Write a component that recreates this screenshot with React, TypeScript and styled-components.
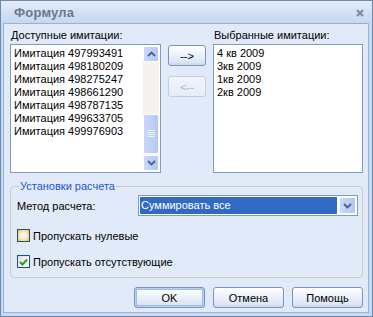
import React from "react";
import styled, { createGlobalStyle } from "styled-components";

const available = [
  "Имитация 497993491",
  "Имитация 498180209",
  "Имитация 498275247",
  "Имитация 498661290",
  "Имитация 498787135",
  "Имитация 499633705",
  "Имитация 499976903",
];

const selected = ["4 кв 2009", "3кв 2009", "1кв 2009", "2кв 2009"];

const GlobalStyle = createGlobalStyle`
  html, body {
    margin: 0;
    padding: 0;
    background: #ffffff;
  }
  body {
    font-family: "Liberation Sans", Arial, sans-serif;
    font-size: 11px;
    color: #000;
  }
`;

const Window = styled.div`
  box-sizing: border-box;
  width: 373px;
  height: 317px;
  display: flex;
  flex-direction: column;
  border: 1px solid #6f87ad;
  background: #c8d9f1;
`;

const TitleBar = styled.div`
  height: 22px;
  display: flex;
  align-items: center;
  justify-content: space-between;
  padding: 0 8px 0 13px;
  background: linear-gradient(#e4edf9, #cfdff4 60%, #c6d8f1);
`;

const Title = styled.span`
  font-size: 13px;
  font-weight: bold;
  color: #6c778a;
  letter-spacing: 0.2px;
`;

const Close = styled.svg`
  display: block;
  margin-top: 1px;
`;

const Body = styled.div`
  flex: 1;
  display: flex;
  flex-direction: column;
  margin: 0 3px 3px 2px;
  border: 1px solid #96b2da;
  background: #e0eaf8;
  padding: 3px 5px 0 6px;
`;

const TopRow = styled.div`
  display: grid;
  grid-template-columns: 151px 38px 150px;
  column-gap: 7px;
`;

const Column = styled.div`
  display: flex;
  flex-direction: column;
`;

const Label = styled.div`
  height: 13px;
  line-height: 13px;
  margin: 2px 0 2px 1px;
`;

const ListBox = styled.div`
  box-sizing: border-box;
  height: 129px;
  border: 1px solid #7f9db9;
  background: #fff;
  display: flex;
`;

const Items = styled.div`
  flex: 1;
  padding: 2px 0 0 3px;
`;

const Item = styled.div`
  height: 13px;
  line-height: 13px;
  white-space: nowrap;
`;

const ScrollBar = styled.div`
  width: 16px;
  margin: 1px 1px 1px 0;
  display: flex;
  flex-direction: column;
  background: #f4f3ee;
`;

const ScrollButton = styled.div<{ $grow?: boolean }>`
  box-sizing: border-box;
  height: ${(p) => (p.$grow ? "40px" : "16px")};
  border: 1px solid #fff;
  border-radius: 2px;
  background: linear-gradient(90deg, #c9d8fc, #bccffa 60%, #b2c7f6);
  display: flex;
  align-items: center;
  justify-content: center;
`;

const Track = styled.div`
  flex: 1;
`;

const MoveColumn = styled.div`
  display: flex;
  flex-direction: column;
  gap: 10px;
  padding-top: 18px;
`;

const Button = styled.button<{ $width?: number; $default?: boolean }>`
  box-sizing: border-box;
  width: ${(p) => p.$width ?? 38}px;
  height: 21px;
  padding: 0;
  font-family: "Liberation Sans", Arial, sans-serif;
  font-size: 11px;
  color: ${(p) => (p.disabled ? "#a9b4c4" : "#000")};
  border: 1px solid ${(p) => (p.disabled ? "#c3cfe0" : "#7d94b8")};
  border-radius: 3px;
  background: ${(p) =>
    p.disabled
      ? "linear-gradient(#f1f5fc, #e6edf8)"
      : "linear-gradient(#ffffff, #edf2fb 45%, #dce6f5 85%, #c9d7ed)"};
  box-shadow: ${(p) =>
    p.$default ? "inset 0 0 0 1px #b7d0f5, inset 0 0 0 2px #9dbdef" : "none"};
`;

const Group = styled.fieldset`
  margin: 7px 0 0 0;
  padding: 3px 4px 9px 6px;
  border: 1px solid #cfccbb;
  border-radius: 4px;
  display: flex;
  flex-direction: column;
`;

const Legend = styled.legend`
  color: #1e55d6;
  padding: 0 1px;
  margin-left: 2px;
  font-size: 11px;
`;

const MethodRow = styled.div`
  display: flex;
  align-items: center;
  justify-content: space-between;
`;

const Select = styled.div`
  box-sizing: border-box;
  width: 220px;
  height: 21px;
  border: 1px solid #7f9db9;
  background: #fff;
  display: flex;
  padding: 1px;
`;

const SelectValue = styled.div`
  flex: 1;
  background: #316ac5;
  color: #fff;
  line-height: 17px;
  padding-left: 1px;
  margin-right: 2px;
`;

const DropButton = styled(ScrollButton)`
  height: 17px;
  width: 17px;
`;

const CheckRow = styled.label<{ $top: number }>`
  display: flex;
  align-items: center;
  gap: 3px;
  height: 13px;
  margin-top: ${(p) => p.$top}px;
`;

const CheckBox = styled.span<{ $hover?: boolean }>`
  box-sizing: border-box;
  width: 13px;
  height: 13px;
  border: 1px solid #1c5180;
  background: ${(p) =>
    p.$hover
      ? "radial-gradient(circle, #f8f4e8 35%, #fbd58a 70%, #f7b43f)"
      : "linear-gradient(135deg, #dcdcd6, #fbfbf9 70%)"};
  display: flex;
  align-items: center;
  justify-content: center;
`;

const Footer = styled.div`
  display: flex;
  justify-content: flex-end;
  gap: 8px;
  margin-top: 9px;
`;

const Arrow = ({ dir }: { dir: "up" | "down" }) => (
  <svg width="9" height="6" viewBox="0 0 9 6">
    <path
      d={dir === "up" ? "M1 5 L4.5 1.5 L8 5" : "M1 1 L4.5 4.5 L8 1"}
      fill="none"
      stroke="#4d6185"
      strokeWidth="1.8"
    />
  </svg>
);

const Grip = () => (
  <svg width="7" height="8" viewBox="0 0 7 8">
    {[0.5, 2.5, 4.5, 6.5].map((y) => (
      <line key={y} x1="0" y1={y} x2="7" y2={y} stroke="#eef3fe" strokeWidth="1" />
    ))}
  </svg>
);

export default function App() {
  return (
    <>
      <GlobalStyle />
      <Window>
        <TitleBar>
          <Title>Формула</Title>
          <Close width="8" height="8" viewBox="0 0 8 8">
            <path d="M1 1 L7 7 M7 1 L1 7" stroke="#7d8899" strokeWidth="2" />
          </Close>
        </TitleBar>
        <Body>
          <TopRow>
            <Column>
              <Label>Доступные имитации:</Label>
              <ListBox>
                <Items>
                  {available.map((t) => (
                    <Item key={t}>{t}</Item>
                  ))}
                </Items>
                <ScrollBar>
                  <ScrollButton>
                    <Arrow dir="up" />
                  </ScrollButton>
                  <Track />
                  <ScrollButton $grow>
                    <Grip />
                  </ScrollButton>
                  <ScrollButton style={{ marginTop: 1 }}>
                    <Arrow dir="down" />
                  </ScrollButton>
                </ScrollBar>
              </ListBox>
            </Column>
            <MoveColumn>
              <Button>--&gt;</Button>
              <Button disabled>&lt;--</Button>
            </MoveColumn>
            <Column>
              <Label>Выбранные имитации:</Label>
              <ListBox>
                <Items>
                  {selected.map((t) => (
                    <Item key={t}>{t}</Item>
                  ))}
                </Items>
              </ListBox>
            </Column>
          </TopRow>

          <Group>
            <Legend>Установки расчета</Legend>
            <MethodRow>
              <span>Метод расчета:</span>
              <Select>
                <SelectValue>Суммировать все</SelectValue>
                <DropButton>
                  <Arrow dir="down" />
                </DropButton>
              </Select>
            </MethodRow>
            <CheckRow $top={13}>
              <CheckBox $hover />
              <span>Пропускать нулевые</span>
            </CheckRow>
            <CheckRow $top={13}>
              <CheckBox>
                <svg width="9" height="8" viewBox="0 0 9 8">
                  <path d="M1 4 L3.5 6.5 L8 1.5" fill="none" stroke="#21a121" strokeWidth="2" />
                </svg>
              </CheckBox>
              <span>Пропускать отсутствующие</span>
            </CheckRow>
          </Group>

          <Footer>
            <Button $width={71} $default>OK</Button>
            <Button $width={71}>Отмена</Button>
            <Button $width={71}>Помощь</Button>
          </Footer>
        </Body>
      </Window>
    </>
  );
}
